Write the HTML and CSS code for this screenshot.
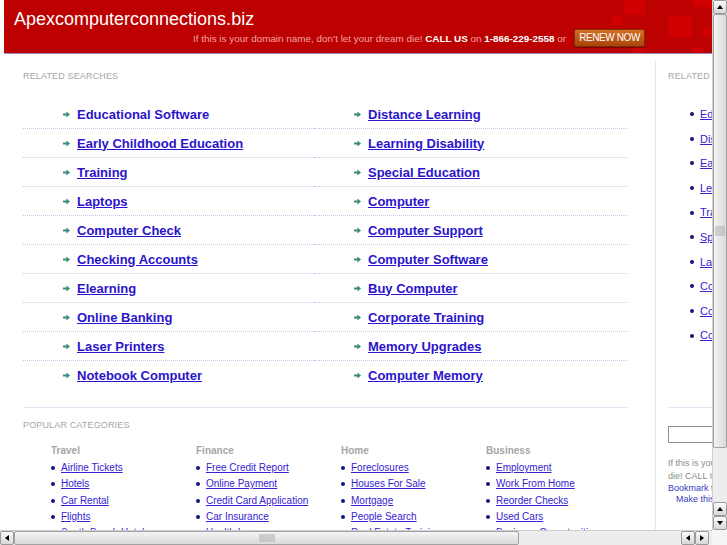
FILE: index.html
```html
<!DOCTYPE html>
<html lang="en">
<head>
    <meta charset="UTF-8">
    <title>Apexcomputerconnections.biz</title>
    <link rel="stylesheet" href="styles.css">
</head>
<body>
<div class="window">
    <div class="viewport">
        <div class="page">
            <div class="header">
                <span class="sq" style="left:620px;top:0;width:21px;height:15px"></span>
                <span class="sq" style="left:608px;top:15px;width:10px;height:10px"></span>
                <span class="sq" style="left:664px;top:16px;width:24px;height:21px"></span>
                <span class="sq" style="left:689px;top:0;width:19px;height:7px"></span>
                <span class="sq" style="left:699px;top:27px;width:12px;height:10px"></span>
                <span class="sq" style="left:629px;top:47px;width:12px;height:7px"></span>
                <span class="sq" style="left:688px;top:48px;width:11px;height:6px"></span>
                <div class="domain">Apexcomputerconnections.biz</div>
                <div class="offer">
                    <span class="pitch">If this is your domain name, don’t let your dream die! <b>CALL US</b> on <b>1-866-229-2558</b> or</span>
                    <a class="renew" href="#">RENEW NOW</a>
                </div>
            </div>

            <div class="columns">
                <div class="main">
                    <div class="label">Related Searches</div>
                    <ul class="searches">
                        <li><a class="hover" href="#">Educational Software</a></li>
                        <li><a href="#">Distance Learning</a></li>
                        <li><a href="#">Early Childhood Education</a></li>
                        <li><a href="#">Learning Disability</a></li>
                        <li><a href="#">Training</a></li>
                        <li><a href="#">Special Education</a></li>
                        <li><a href="#">Laptops</a></li>
                        <li><a href="#">Computer</a></li>
                        <li><a href="#">Computer Check</a></li>
                        <li><a href="#">Computer Support</a></li>
                        <li><a href="#">Checking Accounts</a></li>
                        <li><a href="#">Computer Software</a></li>
                        <li><a href="#">Elearning</a></li>
                        <li><a href="#">Buy Computer</a></li>
                        <li><a href="#">Online Banking</a></li>
                        <li><a href="#">Corporate Training</a></li>
                        <li><a href="#">Laser Printers</a></li>
                        <li><a href="#">Memory Upgrades</a></li>
                        <li><a href="#">Notebook Computer</a></li>
                        <li><a href="#">Computer Memory</a></li>
                    </ul>

                    <div class="label">Popular Categories</div>
                    <div class="categories">
                        <div class="cat">
                            <h3>Travel</h3>
                            <ul>
                                <li><a href="#">Airline Tickets</a></li>
                                <li><a href="#">Hotels</a></li>
                                <li><a href="#">Car Rental</a></li>
                                <li><a href="#">Flights</a></li>
                                <li><a href="#">South Beach Hotels</a></li>
                            </ul>
                        </div>
                        <div class="cat">
                            <h3>Finance</h3>
                            <ul>
                                <li><a href="#">Free Credit Report</a></li>
                                <li><a href="#">Online Payment</a></li>
                                <li><a href="#">Credit Card Application</a></li>
                                <li><a href="#">Car Insurance</a></li>
                                <li><a href="#">Health Insurance</a></li>
                            </ul>
                        </div>
                        <div class="cat">
                            <h3>Home</h3>
                            <ul>
                                <li><a href="#">Foreclosures</a></li>
                                <li><a href="#">Houses For Sale</a></li>
                                <li><a href="#">Mortgage</a></li>
                                <li><a href="#">People Search</a></li>
                                <li><a href="#">Real Estate Training</a></li>
                            </ul>
                        </div>
                        <div class="cat">
                            <h3>Business</h3>
                            <ul>
                                <li><a href="#">Employment</a></li>
                                <li><a href="#">Work From Home</a></li>
                                <li><a href="#">Reorder Checks</a></li>
                                <li><a href="#">Used Cars</a></li>
                                <li><a href="#">Business Opportunities</a></li>
                            </ul>
                        </div>
                    </div>
                </div>

                <div class="side">
                    <div class="label">Related Searches</div>
                    <ul class="side-links">
                        <li><a href="#">Educational Software</a></li>
                        <li><a href="#">Distance Learning</a></li>
                        <li><a href="#">Early Childhood Education</a></li>
                        <li><a href="#">Learning Disability</a></li>
                        <li><a href="#">Training</a></li>
                        <li><a href="#">Special Education</a></li>
                        <li><a href="#">Laptops</a></li>
                        <li><a href="#">Computer</a></li>
                        <li><a href="#">Computer Check</a></li>
                        <li><a href="#">Computer Support</a></li>
                    </ul>
                    <div class="search-box">
                        <input type="text">
                    </div>
                    <p class="note">If this is your domain name, don’t let your dream<br>die! CALL US on 1-866-229-2558</p>
                    <a class="tool" href="#">Bookmark this page</a>
                    <a class="tool indent" href="#">Make this my homepage</a>
                </div>
            </div>
        </div>
    </div>

    <div class="vscroll">
        <div class="sb-btn up"></div>
        <div class="thumb-v"><span class="grip"></span></div>
        <div class="track"></div>
        <div class="sb-btn up"></div>
        <div class="sb-btn down"></div>
    </div>
    <div class="hscroll">
        <div class="sb-btn left"></div>
        <div class="thumb-h"><span class="grip"></span></div>
        <div class="track"></div>
        <div class="sb-btn left"></div>
        <div class="sb-btn right"></div>
        <div class="tail"></div>
    </div>
    <div class="corner"></div>
</div>
</body>
</html>
```

FILE: styles.css
```css
:root {
    --red: #bd0000;
    --square: #d10000;
    --link: #2a14cc;
    --label: #a6a6a6;
    --rule: #dfe8f4;
}
body {
    margin: 0;
    overflow: hidden;
    font-family: 'Liberation Sans', Arial, sans-serif;
    background: #fff;
}
ul {
    list-style: none;
    margin: 0;
    padding: 0;
}
a {
    color: var(--link);
}

.window {
    display: grid;
    grid-template-columns: 712px 15px;
    grid-template-rows: 530px 15px;
    width: 727px;
    height: 545px;
}
.viewport {
    overflow: hidden;
}
.page {
    width: 942px;
}

/* header */
.header {
    position: relative;
    overflow: hidden;
    margin-left: 4px;
    height: 53px;
    background-color: var(--red);
    border-bottom: 1px solid #9d8cc6;
}
.sq {
    position: absolute;
    background-color: var(--square);
}
.domain {
    position: relative;
    padding: 10px 0 0 10px;
    font-size: 18px;
    line-height: 19px;
    color: #fff;
}
.offer {
    position: relative;
    display: flex;
    align-items: center;
    gap: 8px;
    height: 18px;
    padding-left: 189px;
}
.pitch {
    font-size: 9.9px;
    color: #f2a4a4;
    white-space: nowrap;
}
.pitch b {
    color: #fff;
}
.renew {
    width: 69px;
    height: 16px;
    border: 1px solid #7c2f06;
    border-radius: 2px;
    background: linear-gradient(#d36e22, #a9450c);
    box-shadow: 0 1px 1px rgba(0, 0, 0, 0.35);
    color: #fff;
    font-size: 10px;
    letter-spacing: -0.4px;
    line-height: 16px;
    text-align: center;
    text-decoration: none;
}

/* columns */
.columns {
    display: flex;
    margin-top: 6px;
}
.main {
    width: 605px;
    padding: 11px 27px 0 23px;
    border-right: 1px solid var(--rule);
    min-height: 470px;
}
.label {
    font-size: 9px;
    line-height: 11px;
    letter-spacing: 0.15px;
    text-transform: uppercase;
    color: var(--label);
}

.searches {
    display: grid;
    grid-template-columns: 291px 1fr;
    margin-top: 18px;
    padding-bottom: 17px;
    border-bottom: 1px solid var(--rule);
}
.searches li {
    display: flex;
    align-items: center;
    gap: 7px;
    height: 28px;
    padding-left: 40px;
    border-bottom: 1px dotted #b9cde6;
}
.searches li:nth-last-child(-n+2) {
    border-bottom: none;
    height: 29px;
}
.searches li::before {
    content: '';
    width: 7px;
    height: 7px;
    background: url("data:image/svg+xml,%3Csvg xmlns='http://www.w3.org/2000/svg' viewBox='0 0 7 7'%3E%3Cpath d='M0 2.6h3.4V0.6L7 3.5 3.4 6.4V4.4H0z' fill='%23388a7b'/%3E%3C/svg%3E") no-repeat;
}
.searches a {
    font-size: 13px;
    font-weight: bold;
}
.searches a.hover {
    text-decoration: none;
}
.main > .label:nth-of-type(2) {
    margin-top: 12px;
}

.categories {
    display: grid;
    grid-template-columns: repeat(4, 145px);
    padding-left: 28px;
    margin-top: 14px;
}
.cat h3 {
    margin: 0 0 3px;
    font-size: 10px;
    line-height: 12px;
    color: var(--label);
}
.cat li {
    display: flex;
    align-items: center;
    gap: 6px;
    font-size: 10px;
    line-height: 16.3px;
    white-space: nowrap;
}
.cat li::before {
    content: '';
    width: 4px;
    height: 4px;
    border-radius: 50%;
    background-color: #16167e;
}
.cat a {
    color: #3522d2;
}

/* sidebar */
.side {
    width: 230px;
    padding: 11px 0 0 12px;
}
.side-links {
    margin-top: 20px;
    padding-bottom: 59px;
    border-bottom: 1px solid var(--rule);
}
.side-links li {
    display: flex;
    align-items: center;
    gap: 6px;
    padding-left: 22px;
    font-size: 11px;
    line-height: 24.6px;
    white-space: nowrap;
}
.side-links li::before {
    content: '';
    width: 4px;
    height: 4px;
    border-radius: 50%;
    background-color: #16167e;
}
.side-links a {
    color: #3522d2;
}
.search-box {
    margin-top: 17px;
}
.search-box input {
    width: 150px;
    height: 13px;
    border: 1px solid #8f8f8f;
    padding: 1px 2px;
    margin: 0;
}
.note {
    margin: 14px 0 0;
    font-size: 9px;
    line-height: 13px;
    color: #8c8c8c;
    white-space: nowrap;
}
.tool {
    display: block;
    font-size: 9px;
    line-height: 11px;
    color: #3a3ac0;
    text-decoration: none;
}
.tool.indent {
    padding-left: 8px;
}

/* scrollbars */
.vscroll, .hscroll {
    display: flex;
    background-color: #ededed;
    background-image: radial-gradient(#d6d6d6 0.6px, transparent 0.7px);
    background-size: 2px 2px;
}
.vscroll {
    flex-direction: column;
    border-left: 1px solid #cfcfcf;
}
.hscroll {
    border-top: 1px solid #cfcfcf;
}
.track {
    flex: 1;
}
.sb-btn {
    flex: 0 0 auto;
    width: 12px;
    height: 12px;
    border: 1px solid #9a9a9a;
    border-radius: 2px;
    background: linear-gradient(#fbfbfb, #d8d8d8);
    display: flex;
    align-items: center;
    justify-content: center;
}
.sb-btn::before {
    content: '';
    border: 3px solid transparent;
}
.up::before {
    border-top-width: 0;
    border-bottom: 4px solid #000;
}
.down::before {
    border-bottom-width: 0;
    border-top: 4px solid #000;
}
.left::before {
    border-left-width: 0;
    border-right: 4px solid #000;
}
.right::before {
    border-right-width: 0;
    border-left: 4px solid #000;
}
.thumb-v, .thumb-h {
    display: flex;
    align-items: center;
    justify-content: center;
    border: 1px solid #a2a2a2;
    border-radius: 2px;
    box-sizing: border-box;
}
.thumb-v {
    flex: 0 0 434px;
    background: linear-gradient(90deg, #f4f4f4, #dadada);
}
.thumb-h {
    flex: 0 0 505px;
    background: linear-gradient(#f4f4f4, #dadada);
}
.grip {
    width: 10px;
    height: 10px;
    background-image: radial-gradient(#a8a8a8 0.6px, transparent 0.8px);
    background-size: 2px 2px;
}
.thumb-h .grip {
    width: 16px;
    height: 8px;
}
.tail {
    width: 3px;
}
.corner {
    background-color: #f5f5f5;
}
```
